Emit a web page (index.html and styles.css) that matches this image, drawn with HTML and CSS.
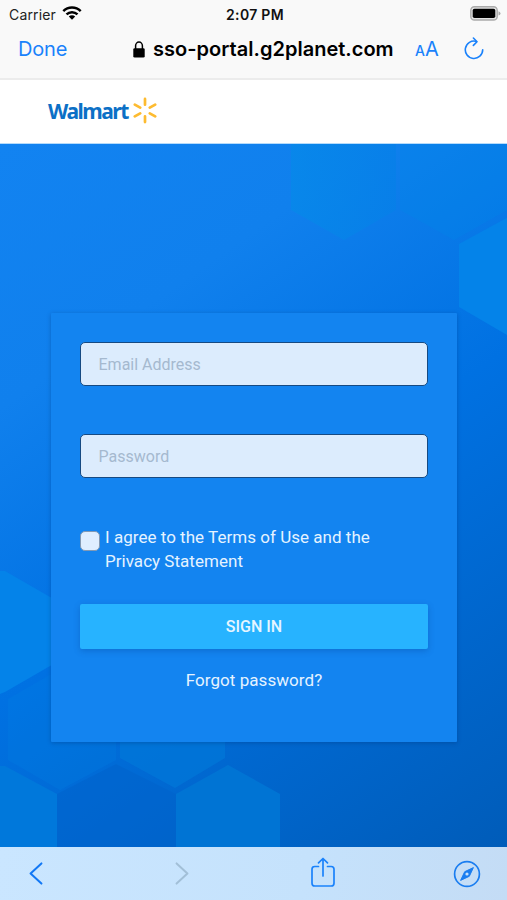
FILE: index.html
```html
<!DOCTYPE html>
<html lang="en">
<head>
    <meta charset="UTF-8">
    <meta name="viewport" content="width=device-width, initial-scale=1.0">
    <title>Sign In</title>
    <link rel="stylesheet" href="styles.css">
</head>
<body>
    <div class="phone">
        <div class="browser-top">
            <div class="status-bar">
                <div class="carrier">
                    <span>Carrier</span>
                    <svg width="20" height="14" viewBox="0 0 20 14" fill="none" stroke="#000" stroke-width="2.5">
                        <path d="M1.3 5.1a12.4 12.4 0 0 1 17.4 0"/>
                        <path d="M4.5 8.4a7.8 7.8 0 0 1 11 0"/>
                        <path d="M10 13.7L6.8 10.5a4.6 4.6 0 0 1 6.4 0z" fill="#000" stroke="none"/>
                    </svg>
                </div>
                <div class="time">2:07 PM</div>
                <svg class="battery" width="31" height="15" viewBox="0 0 31 15">
                    <rect x="0.8" y="0.8" width="26.4" height="13.2" rx="3.6" fill="#e4e4e4" stroke="#aaa" stroke-width="1.4"/>
                    <rect x="2.7" y="2.7" width="22.6" height="9.4" rx="1.8" fill="#000"/>
                    <path d="M28.5 5.2q2 .8 2 2.2t-2 2.2z" fill="#aaa"/>
                </svg>
            </div>
            <div class="address-bar">
                <span class="done">Done</span>
                <div class="address">
                    <svg width="12" height="17" viewBox="0 0 12 17">
                        <path d="M2.6 8V4.8a3.4 3.7 0 0 1 6.8 0V8" fill="none" stroke="#000" stroke-width="1.5"/>
                        <rect x="0.3" y="7.2" width="11.4" height="9.4" rx="1.4" fill="#000"/>
                    </svg>
                    <span class="url">sso-portal.g2planet.com</span>
                </div>
                <div class="text-size"><span class="small-a">A</span><span class="big-a">A</span></div>
                <svg class="reload" width="20" height="24" viewBox="0 0 20 24" fill="none" stroke="#1a82fb" stroke-width="1.6" stroke-linecap="round" stroke-linejoin="round">
                    <path d="M12.4 4.4A8.7 8.7 0 1 0 18.7 12.8"/>
                    <path d="M9.4 1L13 4.7L9.4 8.4"/>
                </svg>
            </div>
        </div>

        <header class="site-header">
            <span class="brand">Walmart</span>
            <svg width="24" height="27" viewBox="-12 -13.5 24 27" stroke="#fdbb30" stroke-width="2.7" stroke-linecap="round">
                <path d="M0 -5.8V-11.6M0 5.8V11.6M4.8 -2.8L10.2 -5.9M4.8 2.8L10.2 5.9M-4.8 -2.8L-10.2 -5.9M-4.8 2.8L-10.2 5.9"/>
            </svg>
        </header>

        <main class="login-page">
            <svg class="hexagons" width="507" height="703" viewBox="0 0 507 703">
                <defs>
                    <linearGradient id="hexTop" x1="0" x2="1">
                        <stop offset="0" stop-color="#0689e9"/>
                        <stop offset="1" stop-color="#0680e8"/>
                    </linearGradient>
                </defs>
                <path d="M291 0V66L344 96L396 66V0z" fill="url(#hexTop)" opacity="0.75"/>
                <path d="M400 0V66L454 96L507 66V0z" fill="#0087e8" opacity="0.3"/>
                <path d="M459 100L512 71V194L459 163z" fill="#0483e9"/>
                <path d="M0 427L5 427L57 457V518L5 548L0 550z" fill="#0483e9"/>
                <path d="M8 555L60 525L116 555V616L60 646L8 616z" fill="#0087e8" opacity="0.2"/>
                <path d="M120 560H225V614L175 644L120 614z" fill="#0078d9" opacity="0.7"/>
                <path d="M0 622L5 622L57 650V703H0z" fill="#0078db"/>
                <path d="M57 650L116 620L176 650V703H57z" fill="#0061c9" opacity="0.45"/>
                <path d="M176 650L228 621L280 650V703H176z" fill="#0074d4"/>
            </svg>
            <form class="login-card">
                <input class="field" type="email" placeholder="Email Address">
                <input class="field" type="password" placeholder="Password">
                <label class="terms">
                    <input class="checkbox" type="checkbox">
                    <span>I agree to the Terms of Use and the<br>Privacy Statement</span>
                </label>
                <button class="sign-in" type="button">SIGN IN</button>
                <a class="forgot">Forgot password?</a>
            </form>
        </main>

        <nav class="toolbar">
            <svg width="28" height="23" viewBox="-7 0 28 23" fill="none" stroke="#1278f5" stroke-width="2" stroke-linecap="round" stroke-linejoin="round">
                <path d="M12.4 1.4L1.6 11.5L12.4 21.6"/>
            </svg>
            <svg width="28" height="23" viewBox="-9 0 28 23" fill="none" stroke="#a2bfd7" stroke-width="2" stroke-linecap="round" stroke-linejoin="round">
                <path d="M1.6 1.4L12.4 11.5L1.6 21.6"/>
            </svg>
            <svg class="share" width="28" height="31" viewBox="-1 0 28 31" fill="none" stroke="#1a82fb" stroke-width="1.7" stroke-linecap="round" stroke-linejoin="round">
                <path d="M8.5 9.5H4.8Q2 9.5 2 12.3V26.2Q2 29 4.8 29H21.2Q24 29 24 26.2V12.3Q24 9.5 21.2 9.5H17.5"/>
                <path d="M13 19V1.8M8.5 5.8L13 1.5L17.5 5.8"/>
            </svg>
            <svg width="28" height="28" viewBox="0 0 28 28">
                <circle cx="14" cy="14" r="12.4" fill="none" stroke="#1a7df0" stroke-width="1.7"/>
                <path d="M20.4 7.6L16.3 16.3L7.6 20.4L11.7 11.7z" fill="#1a7df0" stroke="#1a7df0" stroke-linejoin="round"/>
                <circle cx="14" cy="14" r="1.6" fill="#c6e0fa"/>
            </svg>
        </nav>
    </div>
</body>
</html>
```
FILE: styles.css
```css
* {
    box-sizing: border-box;
}

body {
    margin: 0;
    font-family: Roboto, "Liberation Sans", sans-serif;
    background: #fff;
}

.phone {
    width: 507px;
    height: 900px;
    display: flex;
    flex-direction: column;
    overflow: hidden;
}

.browser-top {
    height: 80px;
    background: #f9f9f9;
    border-bottom: 2px solid #ececec;
    font-family: Inter, "Liberation Sans", sans-serif;
}

.status-bar {
    height: 28px;
    display: grid;
    grid-template-columns: 1fr auto 1fr;
    align-items: center;
    padding: 0 6px 0 9px;
    font-size: 14px;
    color: #222;
}

.carrier {
    display: flex;
    align-items: center;
    gap: 6px;
    letter-spacing: 0.15px;
}

.carrier svg {
    margin-top: -2px;
}

.time {
    font-weight: 600;
    font-size: 14px;
    letter-spacing: 0.3px;
    color: #111;
}

.battery {
    justify-self: end;
    margin-top: -2px;
}

.address-bar {
    height: 42px;
    display: flex;
    align-items: center;
    padding: 0 23px 0 18px;
    color: #1a82fb;
}

.done {
    width: 115px;
    font-size: 20px;
    letter-spacing: -0.2px;
}

.address {
    display: flex;
    align-items: center;
    gap: 8px;
    width: 282px;
    color: #000;
}

.url {
    font-size: 20px;
    font-weight: 600;
    letter-spacing: 0.02px;
}

.text-size {
    width: 49px;
    line-height: 24px;
    padding-top: 1px;
    white-space: nowrap;
}

.small-a {
    font-size: 14px;
    font-weight: 500;
}

.big-a {
    font-size: 20px;
}

.site-header {
    height: 64px;
    display: flex;
    align-items: center;
    gap: 5px;
    padding: 0 48px 2px;
    background: #fff;
    border-bottom: 1px solid #b5dbfb;
}

.brand {
    font-family: "Noto Sans", sans-serif;
    font-size: 21px;
    font-weight: 700;
    letter-spacing: -1.5px;
    color: #0c70c6;
}

.login-page {
    position: relative;
    flex: 1;
    padding: 169px 50px 0 51px;
    background: linear-gradient(145deg, #1283f1 0%, #1080ed 25%, #0071e2 53%, #005cb9 100%);
}

.hexagons {
    position: absolute;
    top: 0;
    left: 0;
}

.login-card {
    position: relative;
    display: flex;
    flex-direction: column;
    height: 429px;
    padding: 29px;
    background: #1384f0;
    border-radius: 1px;
    box-shadow: 0 1px 4px rgba(0, 45, 110, 0.35);
}

.field {
    width: 348px;
    height: 44px;
    margin: 0 0 48px;
    padding: 0 17.5px;
    border: 1.5px solid #164a82;
    border-radius: 5px;
    background: #dcecfd;
    font-family: inherit;
    font-size: 16px;
}

.field::placeholder {
    color: #a5b9cf;
    opacity: 1;
}

.terms {
    display: flex;
    gap: 5px;
    margin-top: -1px;
    color: #e5f3ff;
    font-size: 17px;
    line-height: 24px;
    letter-spacing: 0.03px;
}

.checkbox {
    appearance: none;
    width: 20px;
    height: 20px;
    margin: 6px 0 0;
    border: 1.5px solid #8299b4;
    border-radius: 5px;
    background: #dfeeff;
}

.sign-in {
    height: 45px;
    margin-top: 31px;
    border: 0;
    border-radius: 2px;
    background: #27b3ff;
    box-shadow: 0 2px 6px rgba(0, 60, 140, 0.3);
    color: #e5f5ff;
    font-family: inherit;
    font-size: 16px;
    font-weight: 500;
}

.forgot {
    margin-top: 19px;
    text-align: center;
    font-size: 17px;
    line-height: 24px;
    letter-spacing: 0.06px;
    color: #e5f3ff;
}

.toolbar {
    height: 53px;
    display: flex;
    align-items: center;
    justify-content: space-between;
    padding: 0 26px 0 22px;
    background: linear-gradient(100deg, #cae6ff, #c5e2fc 60%, #c4dcf5);
}

.share {
    margin-top: -2px;
}
```
